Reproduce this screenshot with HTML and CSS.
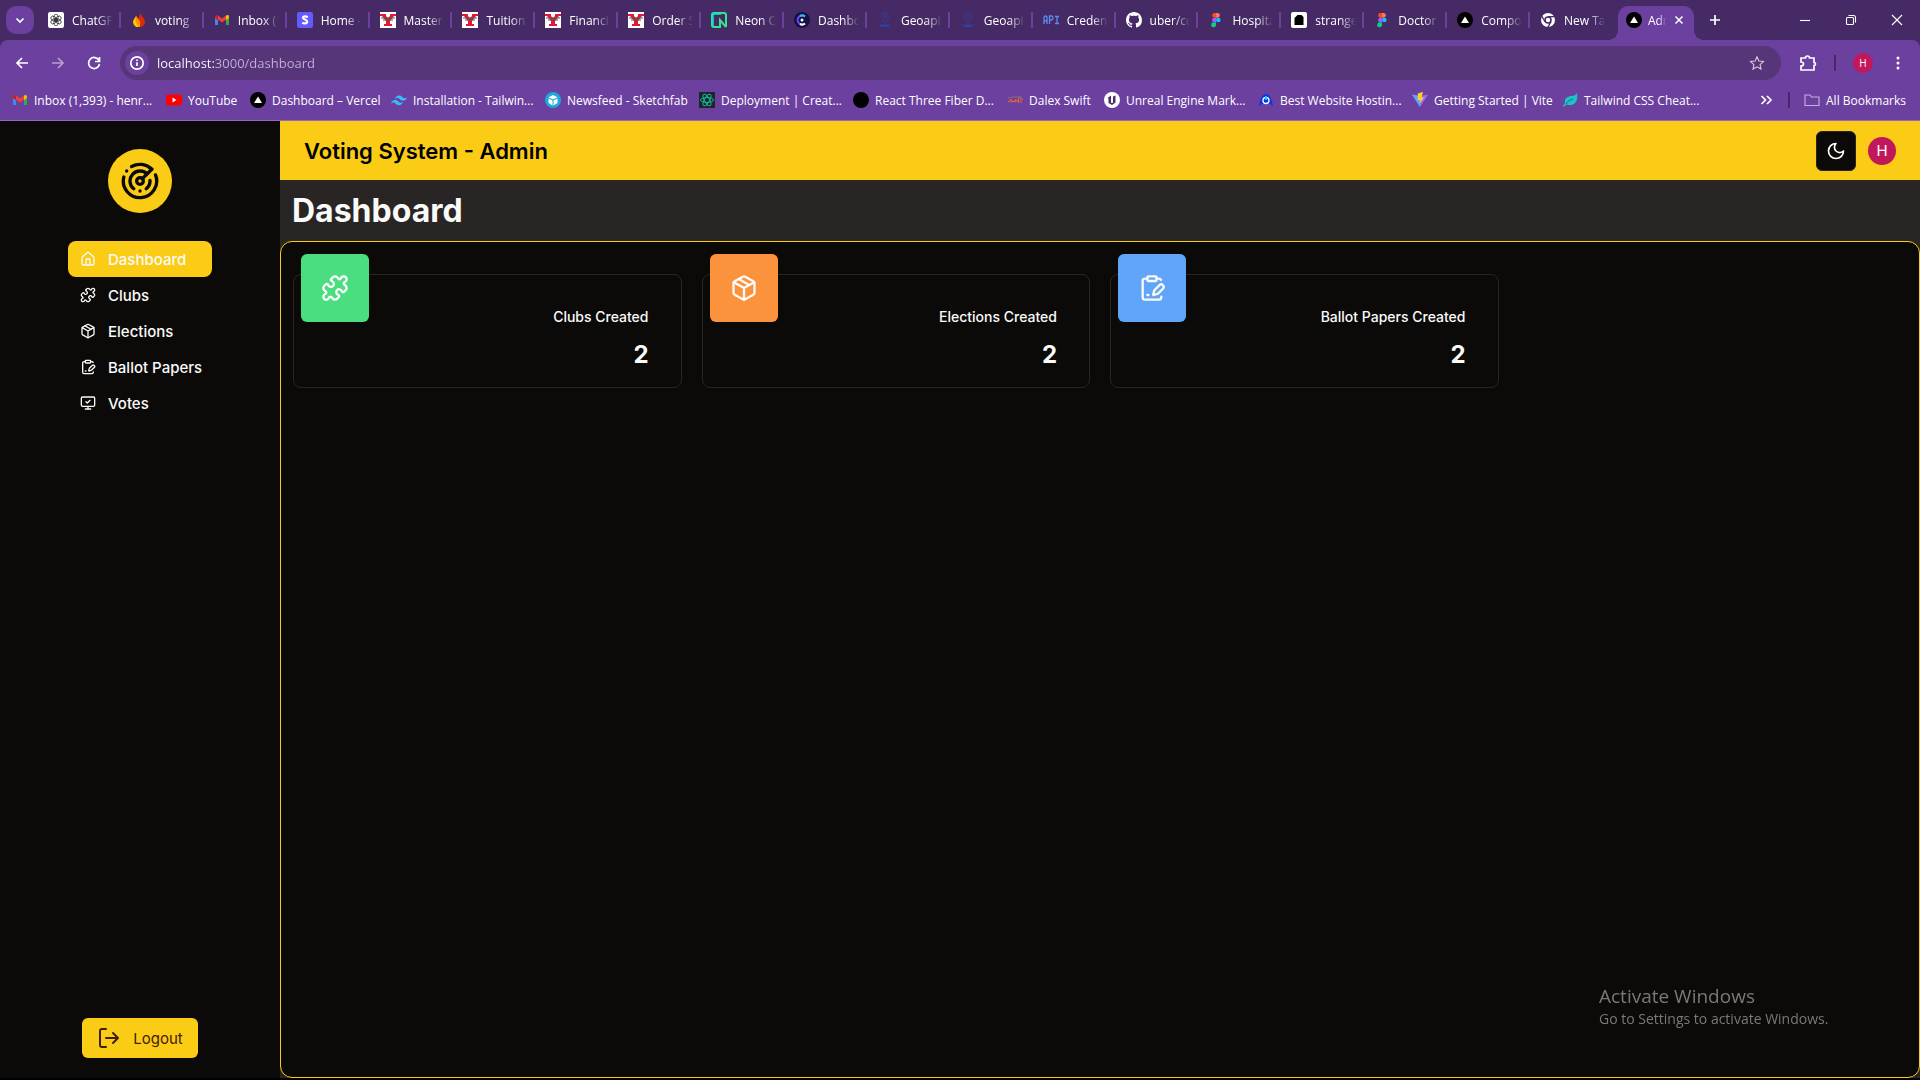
FILE: index.html
```html
<!DOCTYPE html>
<html lang="en">
<head>
<meta charset="utf-8">
<title>Admin Dashboard</title>
<link rel="stylesheet" href="styles.css">
</head>
<body>
<svg class="sprite" aria-hidden="true">
  <symbol id="gpt" viewBox="0 0 16 16"><rect width="16" height="16" rx="2" fill="#fff"/><g fill="none" stroke="#222" stroke-width=".7"><ellipse cx="8" cy="5.600" rx="2.200" ry="3.400"/><ellipse cx="8" cy="5.600" rx="2.200" ry="3.400" transform="rotate(60 8 8)"/><ellipse cx="8" cy="5.600" rx="2.200" ry="3.400" transform="rotate(120 8 8)"/><ellipse cx="8" cy="5.600" rx="2.200" ry="3.400" transform="rotate(180 8 8)"/><ellipse cx="8" cy="5.600" rx="2.200" ry="3.400" transform="rotate(240 8 8)"/><ellipse cx="8" cy="5.600" rx="2.200" ry="3.400" transform="rotate(300 8 8)"/></g></symbol>
  <symbol id="flame" viewBox="0 0 16 16"><path d="M9 1c1 3 5 5 5 9a5 5 0 0 1-5 5c-2 0-2-2-2-5 0-4 2-6 2-9z" fill="#dd2c00"/><path d="M5 4c1 2 4 4 4 7 0 2 0 4-1 4a5 5 0 0 1-6-5c0-2 2-4 3-6z" fill="#ffc400"/><path d="M5 4c1 2 4 4 4 7l-1 4c-3-3-4-7-3-11z" fill="#ff9100"/></symbol>
  <symbol id="gmail" viewBox="0 0 16 16"><path d="M1 4v9h3V7z" fill="#4285f4"/><path d="M15 4v9h-3V7z" fill="#34a853"/><path d="M4 3.500 8 6.500l4-3v4L8 10.500l-4-3z" fill="#ea4335"/><path d="M12 3.500c1.500-1.200 3-.5 3 1v1.500l-3 2.200z" fill="#fbbc04"/><path d="M4 3.500c-1.500-1.200-3-.5-3 1v1.500l3 2.200z" fill="#c5221f"/></symbol>
  <symbol id="stripe" viewBox="0 0 16 16"><rect width="16" height="16" rx="2" fill="#635bff"/><path d="M10.800 5.200C9.500 4.400 6 3.600 6 5.700c0 2 4.200 1.600 4.200 3.900 0 2.500-3.600 2-5 1" fill="none" stroke="#fff" stroke-width="2.200"/></symbol>
  <symbol id="york" viewBox="0 0 16 16"><rect width="16" height="16" fill="#fff"/><path d="M0 2h6v2L8 6l2-2V2h6v2h-2l-4 5v3h2v2H4v-2h2V9L2 4H0z" fill="#e31837"/><path d="M1 6h14M3 8h10" stroke="#555" stroke-width="1"/></symbol>
  <symbol id="neon" viewBox="0 0 16 16"><path d="M15 15V3a2 2 0 0 0-2-2H3a2 2 0 0 0-2 2v10a2 2 0 0 0 2 2h6V8l6 7" fill="none" stroke="#35e58e" stroke-width="2"/><path d="M2 14V2h8" fill="none" stroke="#12dfd5" stroke-width="1.500"/></symbol>
  <symbol id="clerk" viewBox="0 0 16 16"><circle cx="8" cy="8" r="8" fill="#15123b"/><path d="M11 4.500a4.500 4.500 0 1 0 0 7" fill="none" stroke="#6c47ff" stroke-width="2"/><path d="M11 4.500a4.500 4.500 0 0 0-5-.5" fill="none" stroke="#2db7ff" stroke-width="2"/><path d="M6 12a4.500 4.500 0 0 0 5-.5" fill="none" stroke="#fff" stroke-width="2"/><circle cx="8" cy="8" r="1.500" fill="#fff"/></symbol>
  <symbol id="geo" viewBox="0 0 16 16"><g fill="none" stroke="#34409a"><path d="M8 11C5 7 4.500 6 4.500 4.500a3.500 3.500 0 0 1 7 0C11.500 6 11 7 8 11z"/><circle cx="8" cy="4.500" r="1"/></g><path d="M3 14c0-2 3-2.500 5-1 2-1.500 5-1 5 1-2 1.500-8 1.500-10 0z" fill="#34409a"/></symbol>
  <symbol id="api" viewBox="0 0 16 16"><path d="M1 12V6q0-2 1.500-2T4 6v6M1 9h3M6.500 12V4h2q1.500 0 1.500 2t-1.500 2h-2M12 4.500h4M12 11.500h4M14 4.500v7" fill="none" stroke="#5b8def" stroke-width="1.300"/></symbol>
  <symbol id="github" viewBox="0 0 16 16"><path fill="#fff" d="M8 0C3.580 0 0 3.580 0 8c0 3.540 2.290 6.530 5.470 7.590.4.070.55-.17.55-.38 0-.19-.01-.82-.01-1.490-2.010.37-2.530-.49-2.690-.94-.09-.23-.48-.94-.82-1.130-.28-.15-.68-.52-.01-.53.63-.01 1.080.58 1.230.82.720 1.210 1.870.87 2.330.66.070-.52.280-.87.510-1.070-1.780-.2-3.640-.89-3.640-3.950 0-.87.310-1.590.82-2.150-.08-.2-.36-1.020.08-2.120 0 0 .67-.21 2.200.82.640-.18 1.320-.27 2-.27s1.360.09 2 .27c1.530-1.040 2.200-.82 2.200-.82.440 1.100.160 1.920.08 2.120.510.560.820 1.270.820 2.150 0 3.070-1.870 3.750-3.650 3.950.290.250.540.730.540 1.480 0 1.070-.01 1.930-.01 2.200 0 .210.150.460.550.380A8 8 0 0 0 16 8c0-4.420-3.580-8-8-8z"/></symbol>
  <symbol id="figma" viewBox="0 0 16 16"><path d="M8 1H6a2.400 2.400 0 0 0 0 4.700h2z" fill="#f24e1e"/><path d="M8 1h2a2.400 2.400 0 0 1 0 4.700H8z" fill="#ff7262"/><path d="M8 5.700H6a2.400 2.400 0 0 0 0 4.700h2z" fill="#a259ff"/><circle cx="10.300" cy="8" r="2.300" fill="#1abcfe"/><path d="M8 10.400H6A2.400 2.400 0 1 0 8 13z" fill="#0acf83"/></symbol>
  <symbol id="strange" viewBox="0 0 16 16"><rect width="16" height="16" rx="2" fill="#fff"/><path d="M3.500 13V6l3-3h4l2 2v8z" fill="#000"/></symbol>
  <symbol id="vercel" viewBox="0 0 16 16"><circle cx="8" cy="8" r="8" fill="#000"/><path d="m8 4.500 4 6.500H4z" fill="#fff"/></symbol>
  <symbol id="chrome" viewBox="0 0 16 16"><circle cx="8" cy="8" r="7" fill="#fff"/><circle cx="8" cy="8" r="3" fill="#fff" stroke="#452a66" stroke-width="1.500"/><path d="M8 4.600h6.500M5 9.800 1.900 4.300M11 9.800l-3.200 5.600" stroke="#452a66" stroke-width="1.300"/></symbol>
  <symbol id="youtube" viewBox="0 0 16 16"><rect y="2.500" width="16" height="11" rx="2.500" fill="#f00"/><path d="m6.500 5.600 4 2.400-4 2.400z" fill="#fff"/></symbol>
  <symbol id="tailwind" viewBox="0 0 16 16"><path d="M4 7c.6-2.300 2-3.500 4-3.500 3 0 3.400 2.300 5 2.700 1 .3 2 0 3-1-.6 2.300-2 3.500-4 3.500-3 0-3.400-2.300-5-2.700C6 5.700 5 6 4 7zM0 11.500C.6 9.200 2 8 4 8c3 0 3.400 2.300 5 2.700 1 .3 2 0 3-1-.6 2.300-2 3.500-4 3.500-3 0-3.400-2.300-5-2.700-1-.3-2 0-3 1z" fill="#38bdf8"/></symbol>
  <symbol id="sketchfab" viewBox="0 0 16 16"><circle cx="8" cy="8" r="8" fill="#1caad9"/><path d="m8 3 4.500 2.200L8 7.500 3.500 5.200zM3.500 6.500l4 2v5l-4-2.500zM12.500 6.500l-4 2v5l4-2.500z" fill="#fff"/></symbol>
  <symbol id="react" viewBox="0 0 16 16"><rect width="16" height="16" fill="#20232a"/><g fill="none" stroke="#10b89a" stroke-width="1"><ellipse cx="8" cy="8" rx="6.500" ry="2.500"/><ellipse cx="8" cy="8" rx="6.500" ry="2.500" transform="rotate(60 8 8)"/><ellipse cx="8" cy="8" rx="6.500" ry="2.500" transform="rotate(120 8 8)"/></g></symbol>
  <symbol id="dot" viewBox="0 0 16 16"><circle cx="8" cy="8" r="8"/></symbol>
  <symbol id="swift" viewBox="0 0 16 16"><path d="M1 9.500q2 1 2-1t2 0v1.500l2-1 1 1 1-3M10 10V8M11.500 11V7q0-2 2-1M14 11V7h2" fill="none" stroke="#d9653b" stroke-width="1.200"/><path d="M1 6q6-2 14-1" fill="none" stroke="#8d6a78"/></symbol>
  <symbol id="unreal" viewBox="0 0 16 16"><circle cx="8" cy="8" r="8" fill="#fff"/><path d="M3.500 6 7 3.500v7q1 1 2 0V4.500l2.500-1v7L8 13l-3.500-2V6.500z" fill="#4a2f6b"/></symbol>
  <symbol id="host" viewBox="0 0 16 16"><path d="M1 14C2 8 4 2 8 2s6 6 7 12l-3-2H4z" fill="#0a35e8"/><circle cx="8" cy="8.500" r="3" fill="none" stroke="#fff" stroke-width="1.300"/><path d="M8 4v4" stroke="#19c9ff" stroke-width="2"/></symbol>
  <symbol id="vite" viewBox="0 0 16 16"><path d="M0 2.500 8 15l8-12.500-8 1.500z" fill="#9a6bff"/><path d="M0 2.500 8 15 7 4z" fill="#55a7ff"/><path d="M11 0 6 1.200 5.500 8H8l-.7 4L12 5.500H9.500z" fill="#ffcf25"/></symbol>
  <symbol id="leaf" viewBox="0 0 16 16"><path d="M15 1c1 7-1 11-6 12-2 .4-4-.2-5-.5L2 15l-1-1 2-3c-1-5 3-7 7-7 2 0 4-1 5-3z" fill="#14c8c8"/><path d="M4 12q2-4 7-5" fill="none" stroke="#6b409f"/></symbol>

  <symbol id="house" viewBox="0 0 24 24"><path d="M15 21v-8a1 1 0 0 0-1-1h-4a1 1 0 0 0-1 1v8"/><path d="M3 10a2 2 0 0 1 .709-1.528l7-5.999a2 2 0 0 1 2.582 0l7 5.999A2 2 0 0 1 21 10v9a2 2 0 0 1-2 2H5a2 2 0 0 1-2-2z"/></symbol>
  <symbol id="puzzle" viewBox="0 0 24 24"><path d="M19.439 7.850c-.049.322.059.648.289.878l1.568 1.568c.47.47.706 1.087.706 1.704s-.235 1.233-.706 1.704l-1.611 1.611a.98.98 0 0 1-.837.276c-.47-.07-.802-.48-.968-.925a2.501 2.501 0 1 0-3.214 3.214c.446.166.855.497.925.968a.979.979 0 0 1-.276.837l-1.610 1.610a2.404 2.404 0 0 1-1.705.707 2.402 2.402 0 0 1-1.704-.706l-1.568-1.568a1.026 1.026 0 0 0-.877-.290c-.493.074-.840.504-1.020.968a2.500 2.500 0 1 1-3.237-3.237c.464-.180.894-.527.967-1.020a1.026 1.026 0 0 0-.289-.877l-1.568-1.568A2.402 2.402 0 0 1 1.998 12c0-.617.236-1.234.706-1.704L4.230 8.770c.240-.240.581-.353.917-.303.515.077.877.528 1.073 1.010a2.500 2.500 0 1 0 3.259-3.259c-.482-.196-.933-.558-1.010-1.073-.050-.336.062-.676.303-.917l1.525-1.525A2.402 2.402 0 0 1 12 1.998c.617 0 1.234.236 1.704.706l1.568 1.568c.230.230.556.338.877.290.493-.074.840-.504 1.020-.968a2.500 2.500 0 1 1 3.237 3.237c-.464.180-.894.527-.967 1.020Z"/></symbol>
  <symbol id="package" viewBox="0 0 24 24"><path d="m7.500 4.270 9 5.150"/><path d="M21 8a2 2 0 0 0-1-1.730l-7-4a2 2 0 0 0-2 0l-7 4A2 2 0 0 0 3 8v8a2 2 0 0 0 1 1.730l7 4a2 2 0 0 0 2 0l7-4A2 2 0 0 0 21 16Z"/><path d="m3.300 7 8.700 5 8.700-5M12 22V12"/></symbol>
  <symbol id="ballot" viewBox="0 0 24 24"><rect width="8" height="4" x="8" y="2" rx="1"/><path d="M8 4H6a2 2 0 0 0-2 2v14a2 2 0 0 0 2 2h12a2 2 0 0 0 2-2v-.5M16 4h2a2 2 0 0 1 1.730 1M8 18h1"/><path d="M21.378 12.626a1 1 0 0 0-3.004-3.004l-4.010 4.012a2 2 0 0 0-.506.854l-.837 2.870a.5.5 0 0 0 .620.620l2.870-.837a2 2 0 0 0 .854-.506z"/></symbol>
  <symbol id="monitor" viewBox="0 0 24 24"><path d="m9 10 2 2 4-4M12 17v4M8 21h8"/><rect width="20" height="14" x="2" y="3" rx="2"/></symbol>
  <symbol id="radar" viewBox="0 0 24 24"><path d="M19.070 4.930A10 10 0 0 0 6.990 3.340M4 6h.01M2.290 9.620A10 10 0 1 0 21.310 8.350M16.240 7.760A6 6 0 1 0 8.230 16.670M12 18h.01M17.990 11.660A6 6 0 0 1 15.770 16.670"/><circle cx="12" cy="12" r="2"/><path d="m13.410 10.590 5.660-5.660"/></symbol>
  <symbol id="moon" viewBox="0 0 24 24"><path d="M12 3a6 6 0 0 0 9 9 9 9 0 1 1-9-9Z"/></symbol>
  <symbol id="logout" viewBox="0 0 24 24"><path d="M9 21H5a2 2 0 0 1-2-2V5a2 2 0 0 1 2-2h4M16 17l5-5-5-5M21 12H9"/></symbol>
</svg>

<header class="browser">
  <div class="tabstrip">
    <button class="tab-search" aria-label="Search tabs"><svg class="line i16" viewBox="0 0 16 16"><path d="m4.500 6.500 3.500 3.500 3.500-3.500"/></svg></button>
    <nav class="tabs" aria-label="Open tabs">
      <a class="tab" href="#"><svg class="i16"><use href="#gpt"/></svg><span>ChatGPT</span></a>
      <a class="tab" href="#"><svg class="i16"><use href="#flame"/></svg><span>voting</span></a>
      <a class="tab" href="#"><svg class="i16"><use href="#gmail"/></svg><span>Inbox (1</span></a>
      <a class="tab" href="#"><svg class="i16"><use href="#stripe"/></svg><span>Home -</span></a>
      <a class="tab" href="#"><svg class="i16"><use href="#york"/></svg><span>Master</span></a>
      <a class="tab" href="#"><svg class="i16"><use href="#york"/></svg><span>Tuition</span></a>
      <a class="tab" href="#"><svg class="i16"><use href="#york"/></svg><span>Financial</span></a>
      <a class="tab" href="#"><svg class="i16"><use href="#york"/></svg><span>Order S</span></a>
      <a class="tab" href="#"><svg class="i16"><use href="#neon"/></svg><span>Neon C</span></a>
      <a class="tab" href="#"><svg class="i16"><use href="#clerk"/></svg><span>Dashboard</span></a>
      <a class="tab" href="#"><svg class="i16"><use href="#geo"/></svg><span>Geoapify</span></a>
      <a class="tab" href="#"><svg class="i16"><use href="#geo"/></svg><span>Geoapify</span></a>
      <a class="tab" href="#"><svg class="i16"><use href="#api"/></svg><span>Credentials</span></a>
      <a class="tab" href="#"><svg class="i16"><use href="#github"/></svg><span>uber/cc</span></a>
      <a class="tab" href="#"><svg class="i16"><use href="#figma"/></svg><span>Hospital</span></a>
      <a class="tab" href="#"><svg class="i16"><use href="#strange"/></svg><span>strange</span></a>
      <a class="tab" href="#"><svg class="i16"><use href="#figma"/></svg><span>Doctor</span></a>
      <a class="tab" href="#"><svg class="i16"><use href="#vercel"/></svg><span>Compo</span></a>
      <a class="tab last" href="#"><svg class="i16"><use href="#chrome"/></svg><span>New Tab</span></a>
      <a class="tab active" href="#" aria-current="page"><svg class="i16"><use href="#vercel"/></svg><span>Admin</span><svg class="line close" viewBox="0 0 16 16"><path d="m4 4 8 8M12 4l-8 8"/></svg></a>
    </nav>
    <button class="new-tab" aria-label="New tab"><svg class="line i16" viewBox="0 0 16 16"><path d="M8 3v10M3 8h10"/></svg></button>
    <div class="window-controls">
      <button aria-label="Minimize"><svg class="thin i16" viewBox="0 0 16 16"><path d="M3 8.500h10"/></svg></button>
      <button aria-label="Restore"><svg class="thin i16" viewBox="0 0 16 16"><rect x="3.500" y="5.500" width="7" height="7" rx="1"/><path d="M5.500 3.500h5a2 2 0 0 1 2 2v5"/></svg></button>
      <button aria-label="Close"><svg class="thin i16" viewBox="0 0 16 16"><path d="m3 3 10 10M13 3 3 13"/></svg></button>
    </div>
  </div>

  <div class="toolbar">
    <button aria-label="Back"><svg class="line i16" viewBox="0 0 16 16"><path d="M14 8H3M8 3 3 8l5 5"/></svg></button>
    <button class="dim" aria-label="Forward"><svg class="line i16" viewBox="0 0 16 16"><path d="M2 8h11M8 3l5 5-5 5"/></svg></button>
    <button aria-label="Reload"><svg class="line i16" viewBox="0 0 16 16"><path d="M13 5.500A5.500 5.500 0 1 0 13.500 9M13.500 2v4.500H9"/></svg></button>
    <div class="omnibox">
      <button class="site-info" aria-label="View site information"><svg class="line i16" viewBox="0 0 16 16"><circle cx="8" cy="8" r="6.200"/><path d="M8 7.200V11M8 4.600v1.300"/></svg></button>
      <input class="url" type="text" aria-label="Address" value="localhost:3000/dashboard">
      <button class="star" aria-label="Bookmark this tab"><svg class="thin i16" viewBox="0 0 16 16"><path d="m8 1.800 1.900 4.200 4.600.5-3.400 3.100.9 4.500-4-2.300-4 2.300.9-4.500L1.500 6.500 6.100 6z"/></svg></button>
    </div>
    <div class="tools">
      <button aria-label="Extensions"><svg class="line i18" viewBox="0 0 18 18"><path d="M2 4h4.500q0-2 2-2t2 2H15v4.500q1.500 0 1.500 1.500T15 11.500V16H2v-4q2.500 0 2.500-2T2 8z"/></svg></button>
      <span class="divider"></span>
      <button class="profile" aria-label="Profile">H</button>
      <button aria-label="Menu"><svg class="i16" viewBox="0 0 16 16" fill="#fff"><circle cx="8" cy="3" r="1.500"/><circle cx="8" cy="8" r="1.500"/><circle cx="8" cy="13" r="1.500"/></svg></button>
    </div>
  </div>

  <div class="bookmarks">
    <nav class="bookmark-list" aria-label="Bookmarks">
      <a href="#"><svg class="i16"><use href="#gmail"/></svg>Inbox (1,393) - henr...</a>
      <a href="#"><svg class="i16"><use href="#youtube"/></svg>YouTube</a>
      <a href="#"><svg class="i16"><use href="#vercel"/></svg>Dashboard – Vercel</a>
      <a href="#"><svg class="i16"><use href="#tailwind"/></svg>Installation - Tailwin...</a>
      <a href="#"><svg class="i16"><use href="#sketchfab"/></svg>Newsfeed - Sketchfab</a>
      <a href="#"><svg class="i16"><use href="#react"/></svg>Deployment | Creat...</a>
      <a href="#"><svg class="i16"><use href="#dot"/></svg>React Three Fiber D...</a>
      <a href="#"><svg class="i16"><use href="#swift"/></svg>Dalex Swift</a>
      <a href="#"><svg class="i16"><use href="#unreal"/></svg>Unreal Engine Mark...</a>
      <a href="#"><svg class="i16"><use href="#host"/></svg>Best Website Hostin...</a>
      <a href="#"><svg class="i16"><use href="#vite"/></svg>Getting Started | Vite</a>
      <a href="#"><svg class="i16"><use href="#leaf"/></svg>Tailwind CSS Cheat...</a>
    </nav>
    <div class="bookmark-end">
      <button aria-label="More bookmarks"><svg class="line i16" viewBox="0 0 16 16"><path d="m3.500 4 4 4-4 4M9 4l4 4-4 4"/></svg></button>
      <span class="divider"></span>
      <a href="#"><svg class="thin i16 folder" viewBox="0 0 16 16"><path d="M1 13.500V3h5l1.500 2H15v8.500z"/></svg>All Bookmarks</a>
    </div>
  </div>
</header>

<div class="app">
  <aside class="sidebar">
    <a class="logo" href="#" aria-label="Home"><svg class="stroke"><use href="#radar"/></svg></a>
    <nav class="menu">
      <a class="current" href="#"><svg class="stroke i16"><use href="#house"/></svg>Dashboard</a>
      <a href="#"><svg class="stroke i16"><use href="#puzzle"/></svg>Clubs</a>
      <a href="#"><svg class="stroke i16"><use href="#package"/></svg>Elections</a>
      <a href="#"><svg class="stroke i16"><use href="#ballot"/></svg>Ballot Papers</a>
      <a href="#"><svg class="stroke i16"><use href="#monitor"/></svg>Votes</a>
    </nav>
    <button class="logout"><svg class="stroke"><use href="#logout"/></svg>Logout</button>
  </aside>

  <div class="content">
    <header class="topbar">
      <h1>Voting System - Admin</h1>
      <div class="account">
        <button class="theme" aria-label="Toggle theme"><svg class="stroke"><use href="#moon"/></svg></button>
        <button class="avatar" aria-label="Account">H</button>
      </div>
    </header>
    <h2 class="page-title">Dashboard</h2>
    <main class="panel">
      <article class="card">
        <div class="tile green"><svg class="stroke"><use href="#puzzle"/></svg></div>
        <h3>Clubs Created</h3>
        <p>2</p>
      </article>
      <article class="card">
        <div class="tile orange"><svg class="stroke"><use href="#package"/></svg></div>
        <h3>Elections Created</h3>
        <p>2</p>
      </article>
      <article class="card">
        <div class="tile blue"><svg class="stroke"><use href="#ballot"/></svg></div>
        <h3>Ballot Papers Created</h3>
        <p>2</p>
      </article>
    </main>
  </div>
</div>

<div class="watermark">
  <p class="watermark-title">Activate Windows</p>
  <p>Go to Settings to activate Windows.</p>
</div>
</body>
</html>
```

FILE: styles.css
```css
:root {
  --strip: #452a66;
  --toolbar: #6b409f;
  --field: #563679;
  --yellow: #facc15;
  --ink: #0c0a09;
  --band: #292524;
}

* { box-sizing: border-box; margin: 0; }

body {
  display: flex;
  flex-direction: column;
  min-height: 100vh;
  background: #000;
  color: #fafaf9;
  font-family: Inter, sans-serif;
}

a { color: inherit; text-decoration: none; }

button {
  display: flex;
  align-items: center;
  justify-content: center;
  padding: 0;
  border: 0;
  background: none;
  color: inherit;
  font: inherit;
}

svg { flex: none; }
.sprite { position: absolute; width: 0; height: 0; }
.i16 { width: 16px; height: 16px; }
.i18 { width: 18px; height: 18px; }
.line, .thin { fill: none; stroke: currentColor; stroke-width: 1.7; }
.thin { stroke-width: 1.1; }
.stroke {
  fill: none;
  stroke: currentColor;
  stroke-width: 2;
  stroke-linecap: round;
  stroke-linejoin: round;
}

/* Browser frame */
.browser {
  border-bottom: 1px solid #8f6cb8;
  background: var(--strip);
  color: #fff;
  font-family: "Open Sans", sans-serif;
  font-size: 12px;
}

.tabstrip { display: flex; align-items: center; height: 40px; }

.tab-search {
  width: 28px;
  height: 28px;
  margin: 0 4px 0 6px;
  border-radius: 10px;
  background: var(--toolbar);
}

.tabs { display: flex; flex: 1; align-self: flex-end; min-width: 0; }

.tab {
  position: relative;
  display: flex;
  flex: 1 1 0;
  align-items: center;
  gap: 8px;
  height: 34px;
  min-width: 0;
  padding: 0 8px 6px 10px;
}

.tab:not(.last):not(.active)::after {
  content: "";
  position: absolute;
  top: 6px;
  right: 0;
  width: 2px;
  height: 16px;
  background: var(--toolbar);
}

.tab span {
  flex: 1;
  overflow: hidden;
  white-space: nowrap;
  mask-image: linear-gradient(90deg, #000 60%, transparent);
}

.tab.active {
  flex: 0 0 76px;
  gap: 6px;
  margin: 0 4px 0 5px;
  padding: 0 8px 6px;
  border-radius: 10px 10px 0 0;
  background: var(--toolbar);
}

.tab.active::before, .tab.active::after {
  content: "";
  position: absolute;
  bottom: 0;
  width: 10px;
  height: 10px;
}
.tab.active::before { right: 100%; background: radial-gradient(circle at 0 0, transparent 10px, var(--toolbar) 10px); }
.tab.active::after { left: 100%; background: radial-gradient(circle at 100% 0, transparent 10px, var(--toolbar) 10px); }
.close { width: 14px; height: 14px; }

.new-tab { width: 28px; height: 28px; margin: 0 53px 0 3px; }
.window-controls { display: flex; }
.window-controls button { width: 46px; height: 40px; }

.toolbar {
  display: flex;
  align-items: center;
  gap: 20px;
  height: 46px;
  padding: 0 14px;
  border-radius: 8px 8px 0 0;
  background: var(--toolbar);
}
.dim { opacity: .5; }

.omnibox {
  display: flex;
  flex: 1;
  align-items: center;
  height: 34px;
  margin: 0 -2px;
  padding: 0 16px 0 5px;
  border-radius: 17px;
  background: var(--field);
}
.site-info { width: 24px; height: 24px; border-radius: 50%; background: var(--toolbar); }
.url {
  flex: 1;
  margin-left: 8px;
  padding: 0;
  border: 0;
  background: linear-gradient(90deg, #fff 58px, #c3b3d8 58px) text;
  color: transparent;
  font: 13px "Open Sans", sans-serif;
}
.star { color: #d5cbe0; }

.tools { display: flex; align-items: center; gap: 17px; }
.divider { width: 2px; height: 16px; background: var(--strip); }
.profile { width: 20px; height: 20px; border-radius: 50%; background: #c2185b; font-size: 10px; }

.bookmarks {
  display: flex;
  align-items: center;
  justify-content: space-between;
  height: 34px;
  padding: 0 14px 6px 12px;
  background: var(--toolbar);
}
.bookmarks a { display: flex; align-items: center; gap: 6px; white-space: nowrap; }
.bookmark-list {
  display: grid;
  grid-template-columns: 154px 84px 141px repeat(4, 154px) 97px 154px 154px 150px auto;
}
.bookmark-end { display: flex; align-items: center; gap: 14px; }
.folder { color: #c3b3d8; }

/* Application */
.app { display: flex; flex: 1; margin-bottom: 2px; background: var(--ink); }

.sidebar {
  display: flex;
  flex: none;
  flex-direction: column;
  align-items: center;
  width: 280px;
  padding: 28px 0 20px;
}

.logo {
  display: flex;
  align-items: center;
  justify-content: center;
  width: 64px;
  height: 64px;
  border-radius: 50%;
  background: var(--yellow);
  color: var(--ink);
}
.logo svg { width: 40px; height: 40px; }

.menu { width: 144px; margin-top: 28px; font-size: 15px; font-weight: 500; }
.menu a {
  display: flex;
  align-items: center;
  gap: 12px;
  height: 36px;
  padding: 0 0 0 12px;
  border-radius: 8px;
  white-space: nowrap;
}
.menu .current { background: var(--yellow); }

.logout {
  gap: 12px;
  width: 116px;
  height: 40px;
  margin-top: auto;
  border-radius: 6px;
  background: var(--yellow);
  color: #422006;
  font-size: 15px;
}
.logout svg { width: 24px; height: 24px; }

.content { display: flex; flex: 1; flex-direction: column; min-width: 0; background: var(--band); }

.topbar {
  display: flex;
  align-items: center;
  justify-content: space-between;
  height: 59px;
  padding: 0 24px;
  background: var(--yellow);
  color: #000;
}
.topbar h1 { font-size: 22px; font-weight: 600; }

.account { display: flex; align-items: center; gap: 12px; color: #fff; }
.theme { width: 40px; height: 40px; border: 1px solid var(--band); border-radius: 6px; background: var(--ink); }
.theme svg { width: 20px; height: 20px; }
.avatar { width: 28px; height: 28px; border-radius: 50%; background: #c2185b; font-size: 15px; }

.page-title { padding: 0 12px; font-size: 32px; font-weight: 700; line-height: 61px; }

.panel {
  display: grid;
  flex: 1;
  grid-template-columns: repeat(4, 1fr);
  gap: 20px;
  align-content: start;
  padding: 32px 12px;
  border: 1px solid var(--yellow);
  border-radius: 12px;
  background: var(--ink);
}

.card {
  position: relative;
  height: 114px;
  padding: 32px 32px 0;
  border: 1px solid var(--band);
  border-radius: 8px;
  text-align: right;
}
.card h3 { font-size: 14px; font-weight: 500; line-height: 20px; }
.card p { margin-top: 12px; font-size: 24px; font-weight: 700; line-height: 32px; }

.tile {
  position: absolute;
  top: -21px;
  left: 7px;
  display: flex;
  align-items: center;
  justify-content: center;
  width: 68px;
  height: 68px;
  border-radius: 6px;
}
.tile svg { width: 28px; height: 28px; }
.green { background: #4ade80; }
.orange { background: #fb923c; }
.blue { background: #60a5fa; }

/* Desktop notice over the window */
.watermark {
  position: fixed;
  right: 84px;
  bottom: 51px;
  width: 237px;
  color: #7a7978;
  font: 14px/20px "Open Sans", sans-serif;
  white-space: nowrap;
}
.watermark-title { font-size: 19px; line-height: 26px; }
```
